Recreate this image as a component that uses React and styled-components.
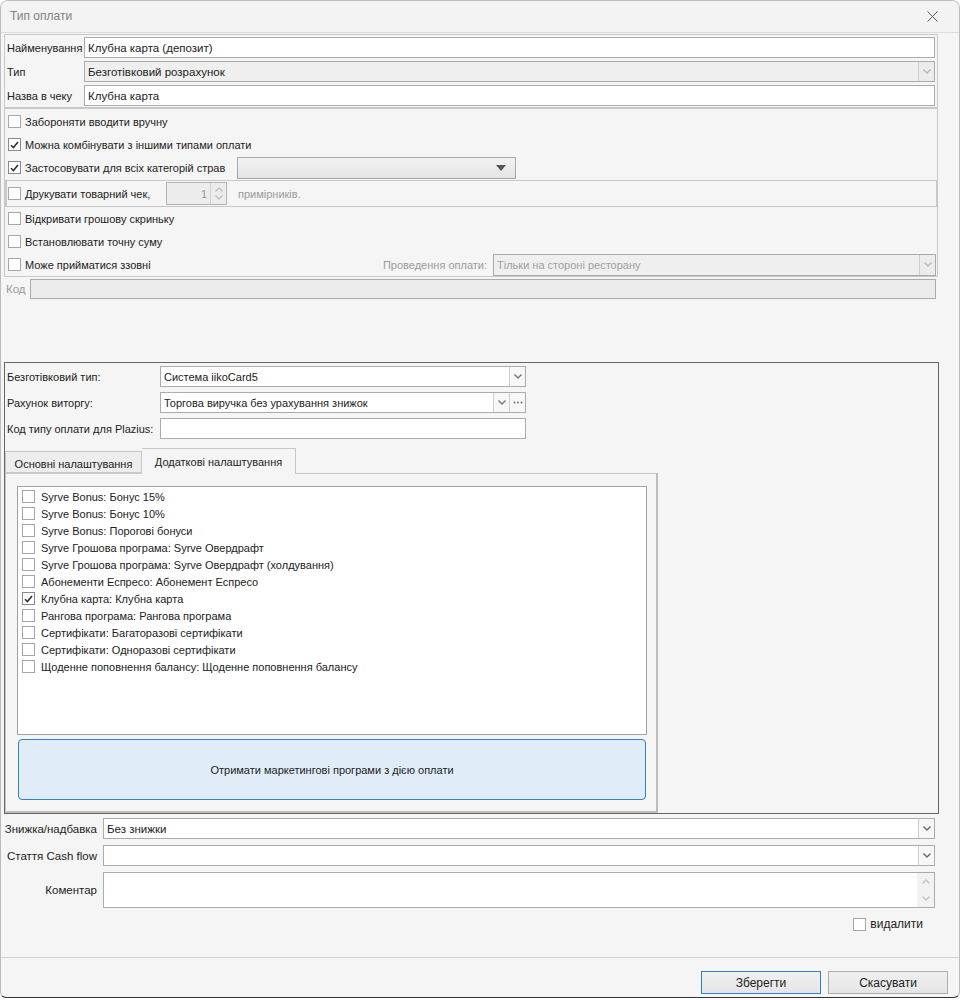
import React from "react";
import styled, { createGlobalStyle } from "styled-components";

const GlobalStyle = createGlobalStyle`
  html, body { margin: 0; padding: 0; background: #ffffff; }
  body {
    font-family: "Liberation Sans", Arial, sans-serif;
    font-size: 12px;
    color: #222;
  }
  * { box-sizing: border-box; }
`;

const Window = styled.div`
  width: 960px;
  height: 998px;
  background: #f5f5f5;
  border: 1px solid #bcbcbc;
  border-bottom: 1px solid #333;
  border-radius: 8px 8px 6px 6px;
  overflow: hidden;
  display: flex;
  flex-direction: column;
`;

const TitleBar = styled.div`
  height: 32px;
  flex: none;
  background: #f3f3f3;
  border-bottom: 1px solid #dcdcdc;
  display: flex;
  align-items: center;
  justify-content: space-between;
  padding: 0 21px 1px 9px;
`;

const Title = styled.span`
  color: #808080;
  font-size: 12px;
`;

const Body = styled.div`
  flex: 1;
  padding: 1px 0 0 3px;
`;

const Column = styled.div`
  width: 934px;
`;

const TopGroup = styled.div`
  border: 1px solid #c8c8c8;
  padding: 2px 2px 1px 0;
  display: grid;
  row-gap: 3px;
`;

const FieldRow = styled.div`
  display: grid;
  grid-template-columns: ${(p) => p.$label}px 1fr;
  align-items: center;
  height: ${(p) => p.$h || 21}px;
`;

const Label = styled.span`
  padding-left: ${(p) => (p.$right ? 0 : 2)}px;
  padding-right: ${(p) => (p.$right ? 6 : 0)}px;
  text-align: ${(p) => (p.$right ? "right" : "left")};
  color: ${(p) => (p.$muted ? "#9a9a9a" : "#222")};
  font-size: ${(p) => p.$size || 11.5}px;
  white-space: nowrap;
`;

const Box = styled.div`
  height: ${(p) => p.$h || 21}px;
  width: ${(p) => (p.$w ? `${p.$w}px` : "auto")};
  border: 1px solid #ababab;
  background: ${(p) => (p.$disabled ? "#efefef" : "#fff")};
  color: ${(p) => (p.$muted ? "#a0a0a0" : "#222")};
  font-size: ${(p) => p.$size || 11.5}px;
  display: flex;
  align-items: center;
  overflow: hidden;
  white-space: nowrap;
`;

const BoxText = styled.span`
  flex: 1;
  padding-left: 3px;
  overflow: hidden;
`;

const DropBtn = styled.span`
  width: 16px;
  height: 100%;
  flex: none;
  border-left: 1px solid #cdcdcd;
  background: ${(p) => (p.$disabled ? "#ececec" : "#f7f7f7")};
  display: flex;
  align-items: center;
  justify-content: center;
`;

const Chevron = ({ color = "#777", up }) => (
  <svg width="8" height="5" viewBox="0 0 8 5">
    <polyline
      points={up ? "0.5,4.5 4,1 7.5,4.5" : "0.5,0.5 4,4 7.5,0.5"}
      fill="none"
      stroke={color}
      strokeWidth="1.4"
    />
  </svg>
);

const Select = ({ value, disabled, muted, size, w, h, dots, color }) => (
  <Box $disabled={disabled} $muted={muted} $size={size} $w={w} $h={h}>
    <BoxText>{value}</BoxText>
    <DropBtn $disabled={disabled}>
      <Chevron color={color || (disabled ? "#b8b8b8" : "#777")} />
    </DropBtn>
    {dots && (
      <DropBtn>
        <svg width="10" height="3" viewBox="0 0 10 3">
          <circle cx="1.5" cy="1.5" r="0.9" fill="#666" />
          <circle cx="5" cy="1.5" r="0.9" fill="#666" />
          <circle cx="8.5" cy="1.5" r="0.9" fill="#666" />
        </svg>
      </DropBtn>
    )}
  </Box>
);

const CheckGroup = styled.div`
  border: 1px solid #c8c8c8;
  padding-top: 1px;
`;

const CheckRow = styled.div`
  height: 23px;
  display: flex;
  align-items: center;
  padding-left: 3px;
  padding-right: 1px;
  font-size: 11px;
`;

const Square = styled.span`
  width: 13px;
  height: 13px;
  flex: none;
  border: 1px solid ${(p) => (p.$checked ? "#8a8a8a" : "#a6a6a6")};
  background: #fff;
  display: flex;
  align-items: center;
  justify-content: center;
`;

const Check = ({ checked }) => (
  <Square $checked={checked}>
    {checked && (
      <svg width="9" height="8" viewBox="0 0 9 8">
        <polyline points="1,4.2 3.4,6.6 8,1" fill="none" stroke="#333" strokeWidth="1.6" />
      </svg>
    )}
  </Square>
);

const CheckText = styled.span`
  margin-left: ${(p) => p.$gap || 4}px;
  width: ${(p) => (p.$w ? `${p.$w}px` : "auto")};
  flex: none;
  white-space: nowrap;
  color: ${(p) => (p.$muted ? "#9a9a9a" : "#222")};
`;

const Combo = styled.div`
  width: 279px;
  height: 22px;
  border: 1px solid #a8a8a8;
  background: linear-gradient(#f2f2f2, #e4e4e4);
  display: flex;
  align-items: center;
  justify-content: flex-end;
  padding-right: 9px;
`;

const PrintBox = styled.div`
  height: 27px;
  margin-top: 1px;
  border: 1px solid #c8c8c8;
  border-left-width: 2px;
  display: flex;
  align-items: center;
  padding-left: 1px;
  font-size: 11px;
`;

const Spinner = styled.div`
  width: 61px;
  height: 23px;
  border: 1px solid #b4b4b4;
  background: #ececec;
  display: flex;
  align-items: center;
  color: #9a9a9a;
`;

const SpinValue = styled.span`
  flex: 1;
  text-align: right;
  padding-right: 3px;
`;

const SpinBtns = styled.span`
  width: 16px;
  height: 100%;
  border-left: 1px solid #d0d0d0;
  display: flex;
  flex-direction: column;
  align-items: center;
  justify-content: space-evenly;
`;

const RightPart = styled.div`
  margin-left: auto;
  display: flex;
  align-items: center;
  gap: 6px;
`;

const CodeRow = styled.div`
  margin-top: 2px;
  height: 20px;
  display: flex;
  align-items: center;
  padding-right: 2px;
`;

const DarkPanel = styled.div`
  margin-top: 63px;
  width: 935px;
  height: 452px;
  border: 1px solid #666;
  font-size: 11px;
`;

const FormGrid = styled.div`
  display: grid;
  grid-template-columns: 155px 366px;
  row-gap: 5px;
  padding-top: 3px;
  align-items: center;
`;

const TabStrip = styled.div`
  margin-top: 9px;
  height: 25px;
  display: flex;
  align-items: flex-end;
`;

const Tab = styled.div`
  width: ${(p) => p.$w}px;
  height: ${(p) => (p.$active ? 26 : 22)}px;
  margin-bottom: ${(p) => (p.$active ? -1 : 0)}px;
  border: 1px solid #c8c8c8;
  border-bottom: ${(p) => (p.$active ? "none" : "1px solid #c8c8c8")};
  border-left: ${(p) => (p.$active ? "none" : "1px solid #c8c8c8")};
  background: ${(p) => (p.$active ? "#f5f5f5" : "#ededed")};
  display: flex;
  align-items: center;
  justify-content: center;
  padding-top: ${(p) => (p.$active ? 0 : 3)}px;
  position: relative;
  z-index: 1;
  color: #222;
`;

const TabPanel = styled.div`
  width: 653px;
  height: 340px;
  border: 1px solid #c8c8c8;
  border-right: 2px solid #bdbdbd;
  border-bottom: 2px solid #bdbdbd;
  padding: 12px 0 0 11px;
`;

const ListBox = styled.div`
  width: 630px;
  height: 249px;
  background: #fff;
  border: 1px solid #a2a2a2;
  padding-top: 1px;
`;

const ListItem = styled.div`
  height: 17px;
  display: flex;
  align-items: center;
  padding-left: 4px;
  gap: 6px;
  white-space: nowrap;
`;

const BigButton = styled.div`
  width: 628px;
  height: 61px;
  margin: 4px 0 0 1px;
  background: #e0edf8;
  border: 1px solid #2f7fd3;
  border-radius: 4px;
  display: flex;
  align-items: center;
  justify-content: center;
  color: #222;
`;

const BottomGrid = styled.div`
  margin-top: 4px;
  display: grid;
  grid-template-columns: 99px 832px;
  row-gap: 6px;
  align-items: center;
`;

const TextArea = styled.div`
  height: 36px;
  border: 1px solid #ababab;
  background: #fff;
  display: flex;
  justify-content: flex-end;
`;

const ScrollCol = styled.div`
  width: 17px;
  background: #f2f2f2;
  display: flex;
  flex-direction: column;
  align-items: center;
  justify-content: space-around;
`;

const DeleteRow = styled.div`
  margin-top: 9px;
  display: flex;
  justify-content: flex-end;
  align-items: center;
  padding-right: 15px;
  gap: 4px;
`;

const Footer = styled.div`
  height: 40px;
  flex: none;
  border-top: 1px solid #d4d4d4;
  display: flex;
  justify-content: flex-end;
  align-items: flex-start;
  gap: 7px;
  padding: 13px 11px 0 0;
`;

const Button = styled.div`
  width: 120px;
  height: 23px;
  border: 1px solid ${(p) => (p.$primary ? "#2b7fd6" : "#adadad")};
  background: linear-gradient(#f0f0f0, #e5e5e5);
  display: flex;
  align-items: center;
  justify-content: center;
  font-size: 12px;
  color: #222;
`;

const programs = [
  "Syrve Bonus: Бонус 15%",
  "Syrve Bonus: Бонус 10%",
  "Syrve Bonus: Порогові бонуси",
  "Syrve Грошова програма: Syrve Овердрафт",
  "Syrve Грошова програма: Syrve Овердрафт (холдування)",
  "Абонементи Еспресо: Абонемент Еспресо",
  "Клубна карта: Клубна карта",
  "Рангова програма: Рангова програма",
  "Сертифікати: Багаторазові сертифікати",
  "Сертифікати: Одноразові сертифікати",
  "Щоденне поповнення балансу: Щоденне поповнення балансу",
];

export default function App() {
  return (
    <>
      <GlobalStyle />
      <Window>
        <TitleBar>
          <Title>Тип оплати</Title>
          <svg width="11" height="11" viewBox="0 0 11 11">
            <path d="M0.5 0.5 L10.5 10.5 M10.5 0.5 L0.5 10.5" stroke="#555" strokeWidth="1" />
          </svg>
        </TitleBar>

        <Body>
          <Column>
            <TopGroup>
              <FieldRow $label={79}>
                <Label $size={11}>Найменування</Label>
                <Box>
                  <BoxText>Клубна карта (депозит)</BoxText>
                </Box>
              </FieldRow>
              <FieldRow $label={79}>
                <Label $size={11}>Тип</Label>
                <Select value="Безготівковий розрахунок" disabled />
              </FieldRow>
              <FieldRow $label={79}>
                <Label $size={11}>Назва в чеку</Label>
                <Box>
                  <BoxText>Клубна карта</BoxText>
                </Box>
              </FieldRow>
            </TopGroup>

            <CheckGroup>
              <CheckRow>
                <Check />
                <CheckText>Забороняти вводити вручну</CheckText>
              </CheckRow>
              <CheckRow>
                <Check checked />
                <CheckText>Можна комбінувати з іншими типами оплати</CheckText>
              </CheckRow>
              <CheckRow>
                <Check checked />
                <CheckText $w={212}>Застосовувати для всіх категорій страв</CheckText>
                <Combo>
                  <svg width="10" height="6" viewBox="0 0 10 6">
                    <polygon points="0,0 10,0 5,6" fill="#555" />
                  </svg>
                </Combo>
              </CheckRow>
              <PrintBox>
                <Check />
                <CheckText $w={141}>Друкувати товарний чек,</CheckText>
                <Spinner>
                  <SpinValue>1</SpinValue>
                  <SpinBtns>
                    <Chevron up color="#c0c0c0" />
                    <Chevron color="#c0c0c0" />
                  </SpinBtns>
                </Spinner>
                <CheckText $gap={11} $muted>
                  примірників.
                </CheckText>
              </PrintBox>
              <CheckRow>
                <Check />
                <CheckText>Відкривати грошову скриньку</CheckText>
              </CheckRow>
              <CheckRow>
                <Check />
                <CheckText>Встановлювати точну суму</CheckText>
              </CheckRow>
              <CheckRow>
                <Check />
                <CheckText>Може прийматися ззовні</CheckText>
                <RightPart>
                  <CheckText $muted>Проведення оплати:</CheckText>
                  <Select value="Тільки на стороні ресторану" disabled muted size={11} w={443} h={22} />
                </RightPart>
              </CheckRow>
            </CheckGroup>

            <CodeRow>
              <Label $muted style={{ width: 26 }}>
                Код
              </Label>
              <Box $disabled $h={20} style={{ flex: 1, background: "#ebebeb" }} />
            </CodeRow>

            <DarkPanel>
              <FormGrid>
                <Label $size={11}>Безготівковий тип:</Label>
                <Select value="Система iikoCard5" size={11} />
                <Label $size={11}>Рахунок виторгу:</Label>
                <Select value="Торгова виручка без урахування знижок" size={11} dots />
                <Label $size={11}>Код типу оплати для Plazius:</Label>
                <Box $size={11} />
              </FormGrid>

              <TabStrip>
                <Tab $w={137}>Основні налаштування</Tab>
                <Tab $w={154} $active>
                  Додаткові налаштування
                </Tab>
              </TabStrip>
              <TabPanel>
                <ListBox>
                  {programs.map((name) => (
                    <ListItem key={name}>
                      <Check checked={name.startsWith("Клубна")} />
                      {name}
                    </ListItem>
                  ))}
                </ListBox>
                <BigButton>Отримати маркетингові програми з дією оплати</BigButton>
              </TabPanel>
            </DarkPanel>

            <BottomGrid>
              <Label $right>Знижка/надбавка</Label>
              <Select value="Без знижки" color="#666" />
              <Label $right>Стаття Cash flow</Label>
              <Select value="" color="#666" />
              <Label $right>Коментар</Label>
              <TextArea>
                <ScrollCol>
                  <Chevron up color="#c4c4c4" />
                  <Chevron color="#c4c4c4" />
                </ScrollCol>
              </TextArea>
            </BottomGrid>

            <DeleteRow>
              <Check />
              <span>видалити</span>
            </DeleteRow>
          </Column>
        </Body>

        <Footer>
          <Button $primary>Зберегти</Button>
          <Button>Скасувати</Button>
        </Footer>
      </Window>
    </>
  );
}
